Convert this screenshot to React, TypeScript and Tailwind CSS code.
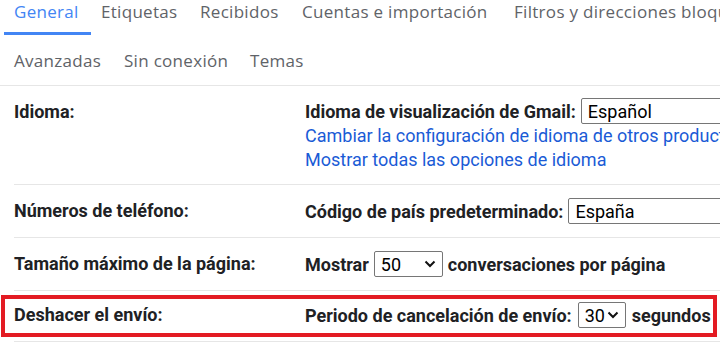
import React from "react";

const Chevron = () => (
  <svg width="12" height="8" viewBox="0 0 12 8" className="shrink-0">
    <path d="M1.5 1.5 L6 6 L10.5 1.5" fill="none" stroke="#111" strokeWidth="2" />
  </svg>
);

const Select = ({ value, width, chevron = true }: { value: string; width: string; chevron?: boolean }) => (
  <div
    className={`flex h-[26px] shrink-0 items-center justify-between border border-[#767676] rounded-[2px] bg-white pl-[6px] pr-[6px] text-[18px] font-normal text-black ${width}`}
    style={{ fontFamily: "Roboto, sans-serif" }}
  >
    <span>{value}</span>
    {chevron && <Chevron />}
  </div>
);

export default function App() {
  const tabs: [string, string][] = [
    ["General", "w-[87px]"],
    ["Etiquetas", "w-[99px]"],
    ["Recibidos", "w-[102px]"],
    ["Cuentas e importación", "w-[212px]"],
    ["Filtros y direcciones bloqueadas", "w-[300px]"],
  ];
  const tabs2: [string, string][] = [
    ["Avanzadas", "w-[110px]"],
    ["Sin conexión", "w-[126px]"],
    ["Temas", "w-[80px]"],
  ];
  return (
    <div className="relative h-[344px] w-[720px] overflow-hidden bg-white" style={{ fontFamily: "Roboto, 'Liberation Sans', sans-serif" }}>
      <div className="border-b border-[#e6e6e6]" style={{ fontFamily: "'Open Sans', Roboto, sans-serif" }}>
        <div className="flex h-[36px] whitespace-nowrap pl-[4px]">
          {tabs.map(([t, w], i) => (
            <div
              key={t}
              className={`relative shrink-0 pl-[10px] text-[17px] leading-[24px] tracking-[0.3px] ${w} ${i === 0 ? "text-[#4285f4]" : "text-[#5f6368]"}`}
            >
              {t}
              {i === 0 && <div className="absolute bottom-[1px] left-0 h-[3px] w-[87px] bg-[#4285f4]" />}
            </div>
          ))}
        </div>
        <div className="flex h-[49px] whitespace-nowrap pl-[14px] pt-[13px]">
          {tabs2.map(([t, w]) => (
            <div key={t} className={`shrink-0 text-[17px] leading-[24px] tracking-[0.3px] text-[#5f6368] ${w}`}>
              {t}
            </div>
          ))}
        </div>
      </div>

      <div className="pl-[14px] text-[18px] text-[#202124]">
        <div className="flex border-b border-[#e6e6e6] pt-[12px] pb-[12px]">
          <div className="w-[291px] shrink-0 pt-[1px] font-bold leading-[26px]">Idioma:</div>
          <div className="flex flex-col whitespace-nowrap">
            <div className="flex h-[26px] items-center gap-[5px]">
              <span className="font-bold">Idioma de visualización de Gmail:</span>
              <Select value="Español" width="w-[180px]" chevron={false} />
            </div>
            <div className="leading-[24px] text-[#1a5bd6]">Cambiar la configuración de idioma de otros productos de Google</div>
            <div className="leading-[24px] text-[#1a5bd6]">Mostrar todas las opciones de idioma</div>
          </div>
        </div>

        <div className="flex border-b border-[#e6e6e6] pt-[13px] pb-[13px]">
          <div className="w-[291px] shrink-0 font-bold leading-[26px]">Números de teléfono:</div>
          <div className="flex h-[26px] items-center gap-[5px] whitespace-nowrap">
            <span className="font-bold">Código de país predeterminado:</span>
            <Select value="España" width="w-[190px]" chevron={false} />
          </div>
        </div>

        <div className="flex border-b border-[#e6e6e6] pt-[13px] pb-[13px]">
          <div className="w-[291px] shrink-0 font-bold leading-[26px]">Tamaño máximo de la página:</div>
          <div className="flex h-[26px] items-center gap-[5px] whitespace-nowrap">
            <span className="font-bold">Mostrar</span>
            <Select value="50" width="w-[69px]" />
            <span className="font-bold">conversaciones por página</span>
          </div>
        </div>

        <div className="flex border-b border-[#e6e6e6] pt-[11px] pb-[13px]">
          <div className="w-[291px] shrink-0 font-bold leading-[26px]">Deshacer el envío:</div>
          <div className="flex h-[26px] items-center gap-[6px] whitespace-nowrap">
            <span className="font-bold">Periodo de cancelación de envío:</span>
            <Select value="30" width="w-[48px]" />
            <span className="font-bold">segundos</span>
          </div>
        </div>
      </div>

      <div className="pointer-events-none absolute left-[1px] top-[295px] h-[42px] w-[716px] border-[4px] border-[#e31b23]" />
    </div>
  );
}
